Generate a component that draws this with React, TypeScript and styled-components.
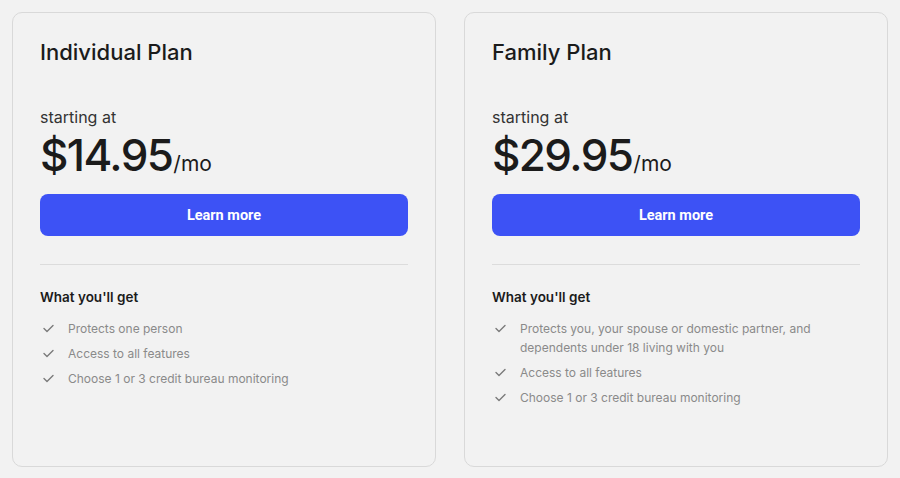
import React from "react";
import styled, { createGlobalStyle } from "styled-components";

const GlobalStyle = createGlobalStyle`
  html, body {
    margin: 0;
    padding: 0;
    background: #f2f2f2;
    font-family: Inter, "Noto Sans", sans-serif;
    color: #1d1d1f;
  }
`;

const Page = styled.main`
  display: grid;
  grid-template-columns: 424px 424px;
  gap: 28px;
  padding: 12px;
`;

const Card = styled.section`
  display: flex;
  flex-direction: column;
  height: 455px;
  box-sizing: border-box;
  padding: 23px 27px;
  border: 1px solid #d9d9d9;
  border-radius: 10px;
  background: #f2f2f2;
`;

const Title = styled.h2`
  margin: 0;
  font-size: 22px;
  line-height: 32px;
  font-weight: 500;
  color: #1b1b1b;
`;

const Starting = styled.p`
  margin: 37px 0 0;
  font-size: 16px;
  line-height: 24px;
  color: #333;
`;

const Price = styled.div`
  display: flex;
  align-items: baseline;
  margin-top: 4px;
  line-height: 44px;
`;

const Amount = styled.span`
  font-size: 44px;
  font-weight: 500;
  letter-spacing: -1.6px;
  color: #1b1b1b;
`;

const Period = styled.span`
  margin-left: 1px;
  font-size: 21px;
  font-weight: 400;
  color: #1b1b1b;
`;

const Button = styled.button`
  margin-top: 8px;
  height: 42px;
  border: none;
  border-radius: 8px;
  background: #3d52f5;
  color: #fff;
  font-family: Roboto, Inter, sans-serif;
  font-size: 14.5px;
  font-weight: 700;
  cursor: pointer;
`;

const Divider = styled.hr`
  margin: 28px 0 0;
  border: none;
  border-top: 1px solid #dcdcdc;
`;

const ListTitle = styled.h3`
  margin: 22px 0 0;
  font-size: 13.5px;
  line-height: 20px;
  font-weight: 600;
  color: #1b1b1b;
`;

const List = styled.ul`
  list-style: none;
  margin: 12px 0 0;
  padding: 0;
  display: flex;
  flex-direction: column;
  gap: 6px;
`;

const Item = styled.li`
  display: flex;
  gap: 13px;
  font-size: 12px;
  line-height: 19px;
  color: #8a8a8a;
`;

const Check = styled.svg`
  flex: none;
  width: 13px;
  height: 19px;
  margin-left: 2px;
`;

const FeatureText = styled.span`
  max-width: 320px;
`;

const CheckIcon = () => (
  <Check viewBox="0 0 13 19" fill="none">
    <path d="M2 9.5l3 3 6-6" stroke="#7a7a7a" strokeWidth="1.4" strokeLinecap="round" strokeLinejoin="round" />
  </Check>
);

type Plan = { name: string; price: string; features: string[] };

const plans: Plan[] = [
  {
    name: "Individual Plan",
    price: "$14.95",
    features: ["Protects one person", "Access to all features", "Choose 1 or 3 credit bureau monitoring"],
  },
  {
    name: "Family Plan",
    price: "$29.95",
    features: [
      "Protects you, your spouse or domestic partner, and dependents under 18 living with you",
      "Access to all features",
      "Choose 1 or 3 credit bureau monitoring",
    ],
  },
];

export default function App() {
  return (
    <>
      <GlobalStyle />
      <Page>
        {plans.map((plan) => (
          <Card key={plan.name}>
            <Title>{plan.name}</Title>
            <Starting>starting at</Starting>
            <Price>
              <Amount>{plan.price}</Amount>
              <Period>/mo</Period>
            </Price>
            <Button>Learn more</Button>
            <Divider />
            <ListTitle>What you'll get</ListTitle>
            <List>
              {plan.features.map((f) => (
                <Item key={f}>
                  <CheckIcon />
                  <FeatureText>{f}</FeatureText>
                </Item>
              ))}
            </List>
          </Card>
        ))}
      </Page>
    </>
  );
}
